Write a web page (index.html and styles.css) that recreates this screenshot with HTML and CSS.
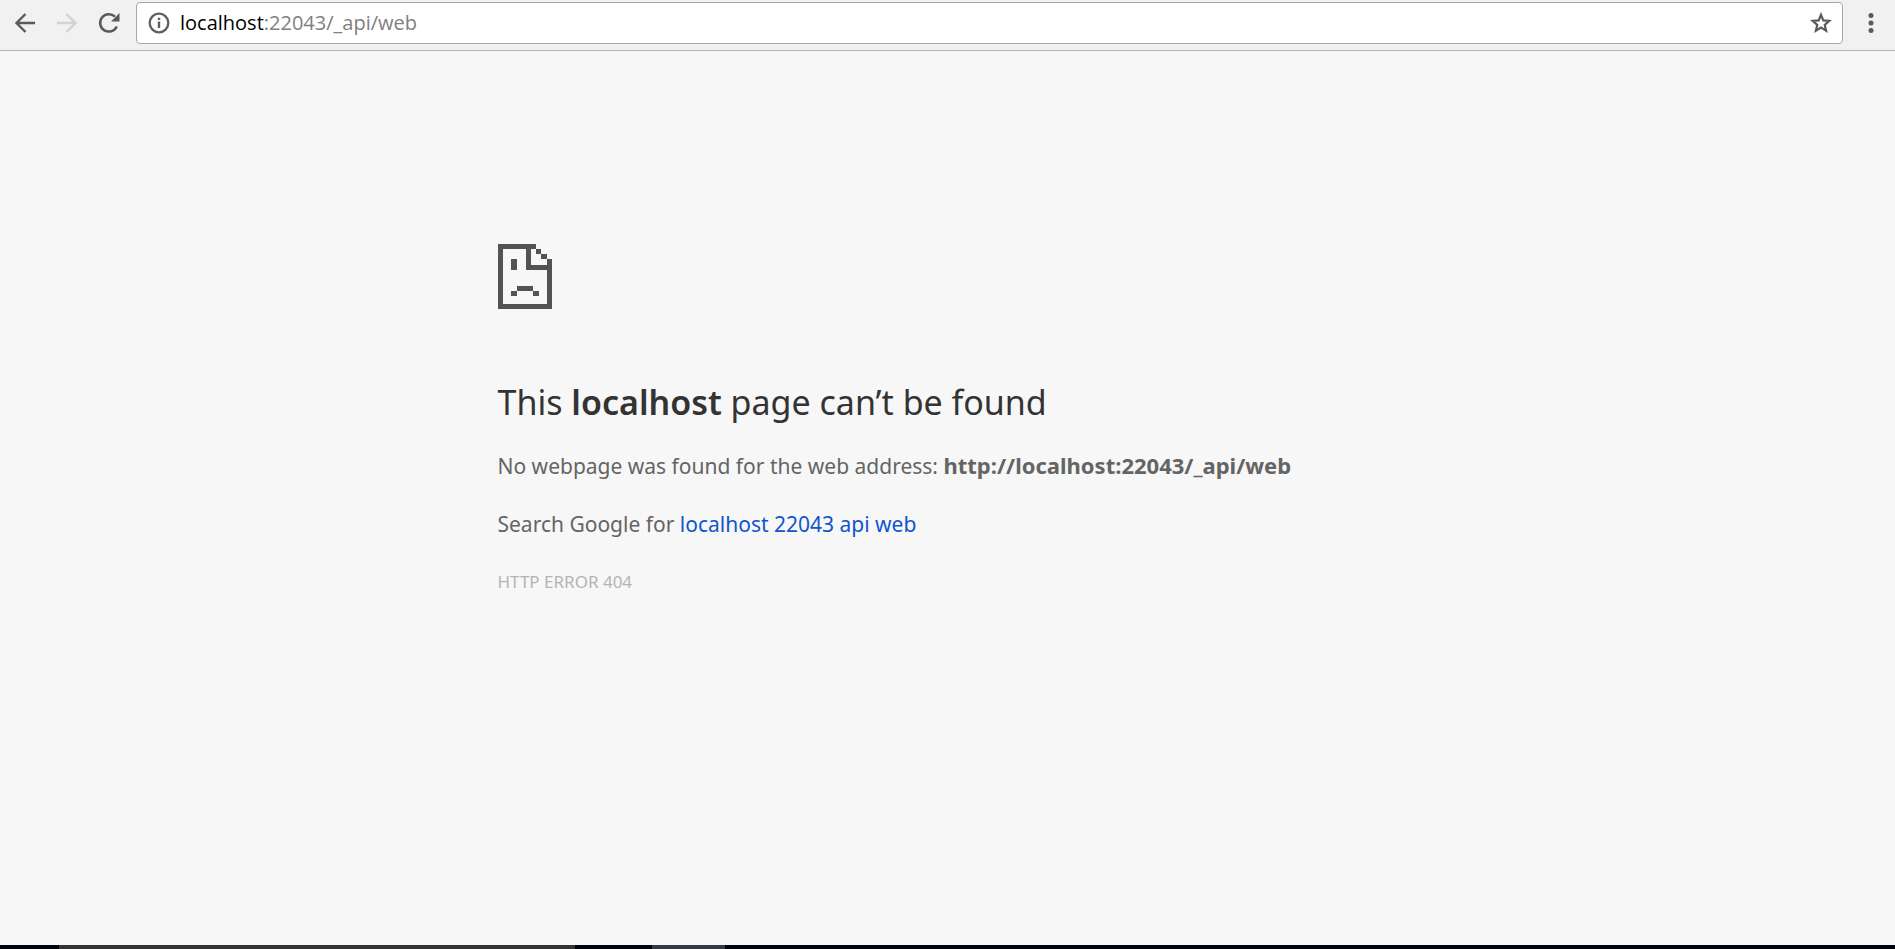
FILE: index.html
```html
<!DOCTYPE html>
<html lang="en">
<head>
<meta charset="utf-8">
<title>localhost</title>
<link rel="stylesheet" href="styles.css">
</head>
<body>
<header class="toolbar">
  <button class="tool" aria-label="Back"><svg width="24" height="24" viewBox="0 0 24 24" fill="none" stroke="#5a5a5a" stroke-width="2.4"><path d="M22 12H4M12.500 3L3.500 12l9 9"/></svg></button>
  <button class="tool" aria-label="Forward" disabled><svg width="24" height="24" viewBox="0 0 24 24" fill="none" stroke="#d2d2d2" stroke-width="2.400"><path d="M2 12h18M11.500 3l9 9-9 9"/></svg></button>
  <button class="tool" aria-label="Reload"><svg width="24" height="24" viewBox="0 0 24 24"><path d="M19.800 15.500A8.700 8.700 0 1 1 18 5.700" fill="none" stroke="#5a5a5a" stroke-width="2.500"/><path d="M22.500 2v8.500H14z" fill="#5a5a5a"/></svg></button>
  <div class="omnibox">
    <button class="icon" aria-label="Site information"><svg width="22" height="22" viewBox="0 0 22 22"><circle cx="11" cy="11" r="9.300" fill="none" stroke="#5f5f5f" stroke-width="2.300"/><path d="M9.800 5.700h2.400v2.400H9.800zM9.800 9.500h2.400V16H9.800z" fill="#5f5f5f"/></svg></button>
    <div class="url" role="textbox" aria-label="Address" contenteditable="true" spellcheck="false"><span class="host">localhost</span>:22043/_api/web</div>
    <button class="icon" aria-label="Bookmark this page"><svg width="22" height="22" viewBox="0 0 22 22"><path d="M11 2.800l2.300 5.600 6 .5-4.600 3.900 1.400 5.900-5.100-3.200-5.100 3.200 1.400-5.900-4.600-3.900 6-.5z" fill="none" stroke="#5a5a5a" stroke-width="2.200"/></svg></button>
  </div>
  <button class="tool menu" aria-label="Menu"><svg width="6" height="22" viewBox="0 0 6 22" fill="#5a5a5a"><circle cx="3" cy="3.500" r="2.500"/><circle cx="3" cy="11" r="2.500"/><circle cx="3" cy="18.500" r="2.500"/></svg></button>
</header>
<main class="page">
  <div class="message">
    <svg class="sad" width="54" height="65" viewBox="0 0 54 65" fill="#535353" shape-rendering="crispEdges" role="img" aria-label="Sad page"><path d="M0 0H38V5H33V21H49V15H54V65H0ZM5 5V60H49V26H28V5Z" fill-rule="evenodd"/><path d="M38 5h5v5h-5zM43 10h6v5h-6zM13 15h6v11h-6zM19 42h16v5H19zM13 47h6v5h-6zM35 47h6v5h-6z"/></svg>
    <h1>This <span class="name">localhost</span> page can’t be found</h1>
    <p>No webpage was found for the web address: <strong>http://localhost:22043/_api/web</strong></p>
    <p>Search Google for <a href="#">localhost 22043 api web</a></p>
    <p class="code">HTTP ERROR 404</p>
  </div>
</main>
<footer class="taskbar"><span class="search"></span><span class="active"></span></footer>
</body>
</html>
```
FILE: styles.css
```css
* { box-sizing: border-box; }
body {
  margin: 0;
  min-height: 100vh;
  display: flex;
  flex-direction: column;
  background: #f7f7f7;
  color: #646464;
  font-family: "Segoe UI", "Noto Sans", "Open Sans", sans-serif;
}
button {
  padding: 0;
  border: 0;
  background: none;
  display: flex;
  align-items: center;
  justify-content: center;
}
.toolbar {
  display: flex;
  align-items: center;
  height: 51px;
  padding: 0 8px 4px 4px;
  background: #f1f1f1;
  border-bottom: 1px solid #b4b4b4;
}
.tool { width: 42px; height: 42px; }
.omnibox {
  flex: 1;
  display: flex;
  align-items: center;
  height: 42px;
  margin-left: 6px;
  padding: 0 10px 0 11px;
  background: #fff;
  border: 1px solid #a8a8a8;
  border-radius: 4px;
}
.url {
  flex: 1;
  margin-left: 10px;
  font-family: "Segoe UI", "Open Sans", sans-serif;
  font-size: 20px;
  line-height: 28px;
  color: #808080;
  outline: 0;
}
.host { color: #000; }
.menu { width: 32px; margin-left: 12px; }
.page { flex: 1; }
.message {
  width: 100%;
  max-width: 900px;
  margin: 0 auto;
  padding-top: 193px;
}
.sad { display: block; }
h1 {
  margin: 69px 0 22px;
  font-size: 34px;
  line-height: 48px;
  font-weight: 400;
  color: #333;
}
.name { font-weight: 600; }
p {
  margin: 0 0 24px;
  font-size: 21px;
  line-height: 34px;
}
strong { font-size: 22px; }
a { color: #1155cc; text-decoration: none; }
.code { font-size: 17px; color: #b4b4b4; }
.taskbar {
  display: flex;
  height: 4px;
  padding-left: 59px;
  background: #00040c;
}
.search { width: 516px; background: #333; }
.active { width: 73px; margin-left: 77px; background: #343a44; }
```
